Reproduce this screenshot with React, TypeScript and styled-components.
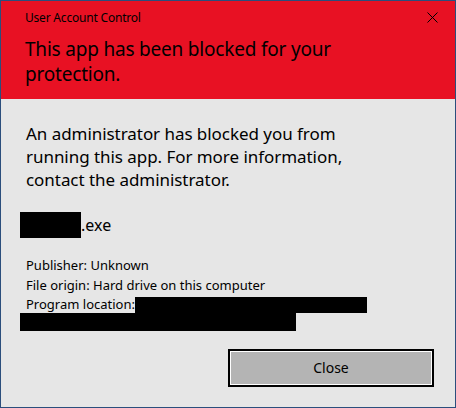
import React from 'react';
import styled, { createGlobalStyle } from 'styled-components';

const GlobalStyle = createGlobalStyle`
  html, body {
    margin: 0;
    padding: 0;
    background: #e6e6e6;
  }
  * {
    box-sizing: border-box;
  }
`;

const Window = styled.div`
  width: 456px;
  height: 408px;
  border: 1px solid #2b4e7c;
  background: #e6e6e6;
  font-family: 'Noto Sans', 'Open Sans', sans-serif;
  color: #000;
  display: flex;
  flex-direction: column;
`;

const Header = styled.header`
  background: #e81123;
  height: 98px;
  padding: 4px 0 0 24px;
  display: flex;
  flex-direction: column;
`;

const TitleBar = styled.div`
  display: flex;
  align-items: center;
  justify-content: space-between;
  height: 24px;
`;

const Caption = styled.span`
  font-size: 12px;
  letter-spacing: -0.2px;
`;

const CloseX = styled.button`
  width: 46px;
  height: 24px;
  border: 0;
  padding: 0;
  background: transparent;
  display: flex;
  align-items: center;
  justify-content: center;
`;

const Heading = styled.h1`
  margin: 8px 0 0;
  font-size: 19px;
  font-weight: 400;
  line-height: 25px;
  letter-spacing: -0.2px;
  width: 330px;
`;

const Body = styled.main`
  flex: 1;
  padding: 23px 21px 0 19px;
  display: flex;
  flex-direction: column;
`;

const Message = styled.p`
  margin: 0 0 0 6px;
  font-size: 17px;
  line-height: 23px;
  letter-spacing: -0.05px;
  width: 330px;
`;

const FileName = styled.div`
  margin-top: 21px;
  display: flex;
  align-items: center;
  font-size: 16px;
  height: 26px;
`;

const Redacted = styled.span<{ $w: number; $h: number }>`
  display: inline-block;
  width: ${(p) => p.$w}px;
  height: ${(p) => p.$h}px;
  background: #000;
`;

const Details = styled.div`
  margin-top: 18px;
  font-size: 13px;
  line-height: 19.5px;
`;

const DetailLine = styled.div<{ $tight?: boolean }>`
  padding-left: 6px;
  display: flex;
  align-items: center;
  height: ${(p) => (p.$tight ? '17px' : '19.5px')};
  margin-top: ${(p) => (p.$tight ? '1px' : '0')};
`;

const Footer = styled.div`
  display: flex;
  justify-content: flex-end;
  padding-top: 12px;
`;

const Button = styled.button`
  width: 206px;
  height: 38px;
  background: #b4b4b4;
  border: 2px solid #000;
  box-shadow: inset 0 0 0 1px #fff;
  font-family: inherit;
  font-size: 14px;
  color: #000;
`;

export default function App() {
  return (
    <>
      <GlobalStyle />
      <Window>
        <Header>
          <TitleBar>
            <Caption>User Account Control</Caption>
            <CloseX aria-label="Close">
              <svg width="11" height="11" viewBox="0 0 11 11">
                <path d="M0.5 0.5 L10.5 10.5 M10.5 0.5 L0.5 10.5" stroke="#000" strokeWidth="1" />
              </svg>
            </CloseX>
          </TitleBar>
          <Heading>This app has been blocked for your protection.</Heading>
        </Header>
        <Body>
          <Message>
            An administrator has blocked you from running this app. For more information, contact the
            administrator.
          </Message>
          <FileName>
            <Redacted $w={61} $h={26} />
            <span>.exe</span>
          </FileName>
          <Details>
            <DetailLine>Publisher: Unknown</DetailLine>
            <DetailLine>File origin: Hard drive on this computer</DetailLine>
            <DetailLine $tight>
              Program location:
              <Redacted $w={232} $h={16} />
            </DetailLine>
            <Redacted $w={276} $h={18} />
          </Details>
          <Footer>
            <Button>Close</Button>
          </Footer>
        </Body>
      </Window>
    </>
  );
}
